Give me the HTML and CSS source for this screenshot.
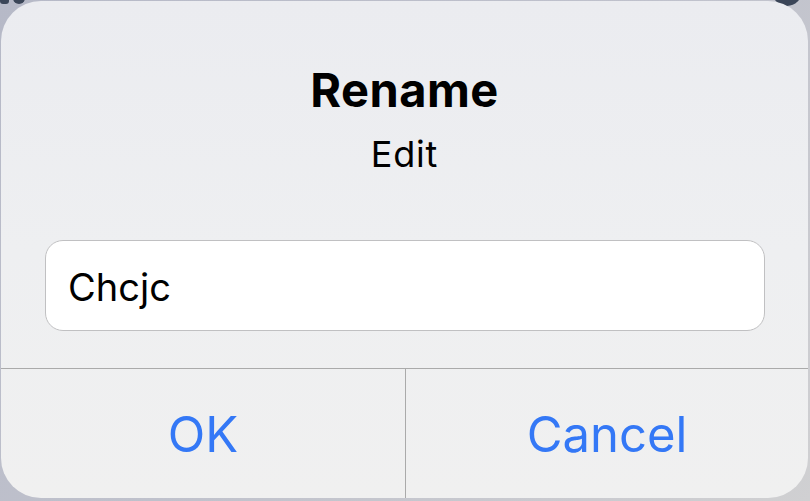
FILE: index.html
```html
<!DOCTYPE html>
<html>
<head>
<meta charset="utf-8">
<link rel="stylesheet" href="styles.css">
</head>
<body>
<div class="backdrop">
  <span class="bg-blob bg-blob-a"></span>
  <span class="bg-blob bg-blob-b"></span>
  <span class="bg-dot"></span>
</div>
<div class="dialog">
  <div class="header">
    <div class="title">Rename</div>
    <div class="message">Edit</div>
  </div>
  <div class="field">
    <div class="input">Chcjc</div>
  </div>
  <div class="actions">
    <div class="btn">OK</div>
    <div class="btn">Cancel</div>
  </div>
</div>
</body>
</html>
```
FILE: styles.css
```css
html, body {
  margin: 0;
  padding: 0;
}
body {
  width: 810px;
  height: 501px;
  overflow: hidden;
  position: relative;
  background: linear-gradient(135deg, #b6b9c7 0%, #bfc1cc 50%, #d0d0d2 100%);
  font-family: "Inter", "Liberation Sans", sans-serif;
}
.backdrop {
  position: absolute;
  inset: 0;
}
.bg-blob {
  position: absolute;
  background: #3b4658;
  border-radius: 3px;
}
.bg-blob-a {
  left: 0;
  top: -4px;
  width: 9px;
  height: 8px;
}
.bg-blob-b {
  left: 13px;
  top: -4px;
  width: 12px;
  height: 8px;
  border-radius: 0 0 6px 6px;
}
.bg-dot {
  position: absolute;
  left: 772px;
  top: -24px;
  width: 30px;
  height: 30px;
  border-radius: 50%;
  background: #3b4658;
}
.dialog {
  position: relative;
  margin: 1px 2px 0 1px;
  height: 497px;
  border-radius: 40px;
  background: linear-gradient(180deg, #ebecf0 0%, #eeeff1 50%, #f0f0f0 100%);
  display: flex;
  flex-direction: column;
  overflow: hidden;
}
.header {
  padding-top: 61px;
  display: flex;
  flex-direction: column;
  align-items: center;
}
.title {
  font-size: 47px;
  font-weight: 700;
  line-height: 56px;
  color: #000;
  letter-spacing: 0.5px;
}
.message {
  margin-top: 14px;
  font-size: 36px;
  line-height: 44px;
  color: #000;
  letter-spacing: 0.8px;
}
.field {
  margin-top: 64px;
  padding: 0 43px 0 44px;
}
.input {
  border: 1px solid #c0c0c2;
  border-radius: 18px;
  background: #fff;
  padding-left: 22px;
  padding-top: 3px;
  box-sizing: content-box;
  height: 86px;
  font-size: 38px;
  line-height: 86px;
  color: #000;
}
.actions {
  margin-top: 37px;
  flex: 1;
  display: grid;
  grid-template-columns: 404px 1fr;
  border-top: 1px solid #aaaaaa;
}
.btn {
  display: flex;
  align-items: center;
  justify-content: center;
  font-size: 49px;
  color: #3478f6;
  padding-top: 2px;
}
.btn + .btn {
  border-left: 1px solid #aaaaaa;
}
```
